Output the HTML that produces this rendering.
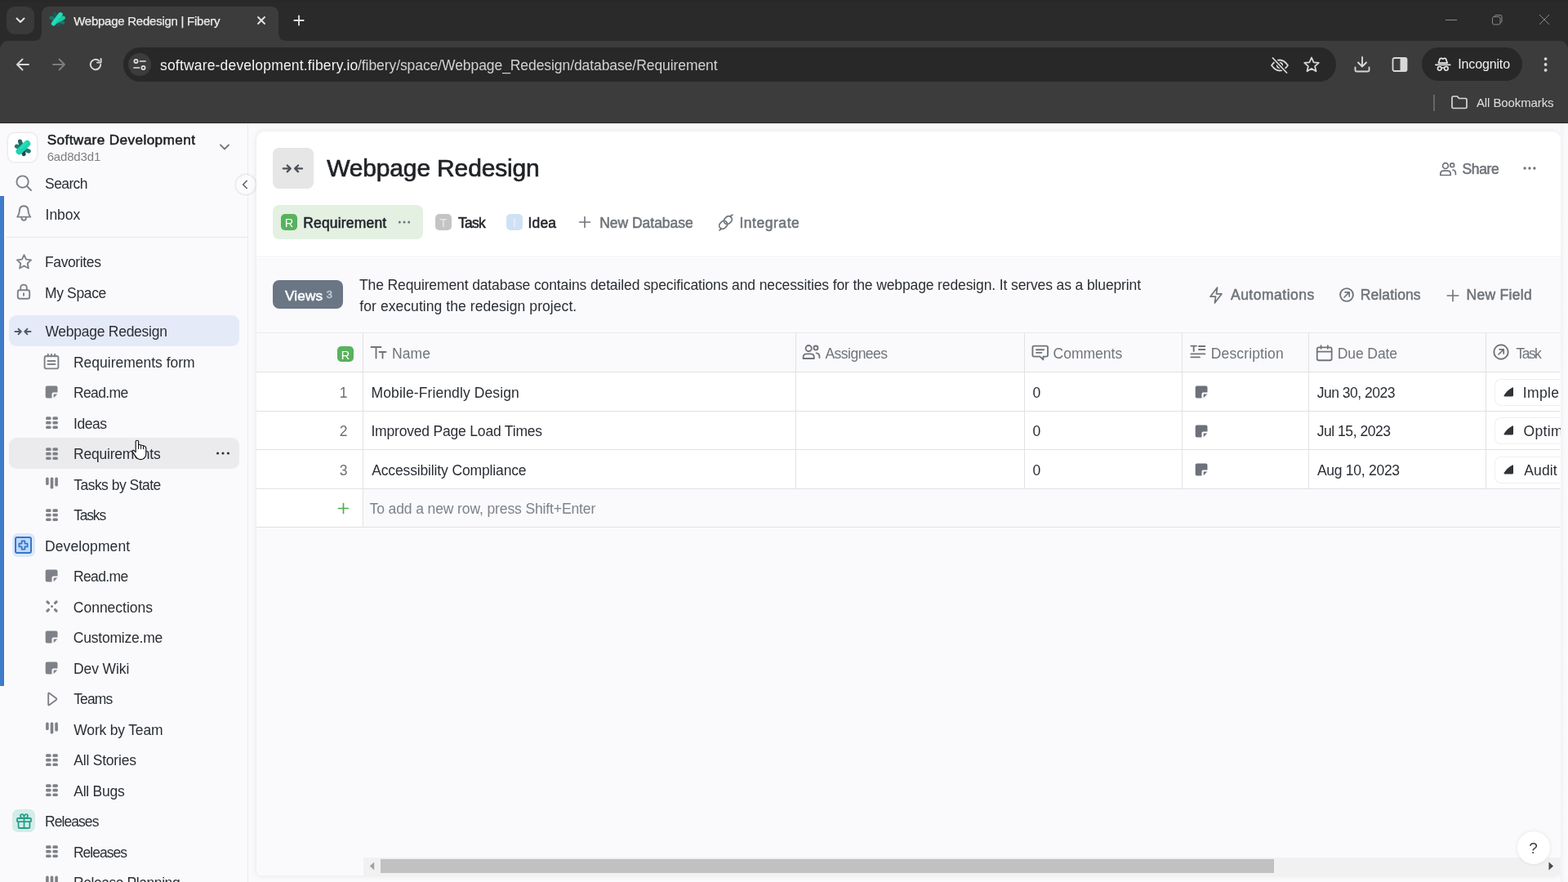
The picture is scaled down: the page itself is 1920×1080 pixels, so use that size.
<!DOCTYPE html>
<html lang="en">
<head>
<meta charset="utf-8">
<title>Webpage Redesign | Fibery</title>
<style>
html,body{margin:0;padding:0;overflow:hidden;}
body{width:1920px;height:1080px;overflow:hidden;position:relative;background:#fafafc;font-family:"Liberation Sans", sans-serif;font-size:17.5px;}
.a{position:absolute;display:block;box-sizing:border-box;}
.t{white-space:nowrap;}
.g{position:absolute;left:0;top:0;width:0;height:0;display:block;}
#w{position:absolute;left:0;top:0;width:1920px;height:1080px;will-change:transform;}
svg.a{overflow:visible;}
</style>
</head>
<body>
<div id="w">
<header id="browser" class="g" aria-label="Browser window">
<div class="a" style="left:0px;top:0px;width:1920px;height:150px;background:#2a2a2a;"></div>
<div class="a" style="left:0px;top:0px;width:1920px;height:3px;background:#282828;"></div>
<div class="a" style="left:8px;top:8px;width:34px;height:34px;background:#3a3a3a;border-radius:10px;"></div>
<svg class="a" style="left:18px;top:19px;" width="14" height="12" viewBox="0 0 14 12"><path d="M2.5 3.5 L7 8 L11.5 3.5" fill="none" stroke="#e3e3e3" stroke-width="2" stroke-linecap="round" stroke-linejoin="round"/></svg>
<div class="a" style="left:0px;top:50px;width:1920px;height:100px;background:#3c3c3c;border-radius:10px 10px 0 0;"></div>
<svg class="a" style="left:41px;top:8px;" width="310" height="42" viewBox="0 0 310 42"><path d="M0 42 Q10 42 10 32 L10 10 Q10 0 20 0 L290 0 Q300 0 300 10 L300 32 Q300 42 310 42 Z" fill="#3c3c3c"/></svg>
<svg class="a" style="left:58.5px;top:12.2px;" width="23" height="23" viewBox="0 0 23 23"><g transform="translate(11.5 11.5) scale(1.02)" stroke-linecap="round" fill="none"><path d="M-7.6 -1.6 L6.4 4" stroke="#1c7468" stroke-width="4.4"/><path d="M-3.4 -6.6 L1.2 6.6" stroke="#1a5b58" stroke-width="4.2"/><path d="M-4.8 5.2 L3.4 -5.6" stroke="#1fd8b3" stroke-width="5.4"/><path d="M-1.5 2.8 L7 -1.6" stroke="#1cc9a6" stroke-width="4.6"/><path d="M-4.8 5.2 L3.4 -5.6" stroke="#22dfba" stroke-width="3"/></g></svg>
<span class="a t" style="left:90.23px;top:15.00px;font-size:15px;line-height:21px;color:#ebebeb;letter-spacing:-0.254px;-webkit-text-stroke:0.25px #ebebeb;">Webpage Redesign | Fibery</span>
<svg class="a" style="left:313px;top:18px;" width="14" height="14" viewBox="0 0 14 14"><path d="M3 3 L11 11 M11 3 L3 11" stroke="#e6e6e6" stroke-width="1.8" stroke-linecap="round"/></svg>
<svg class="a" style="left:357.5px;top:17px;" width="16" height="16" viewBox="0 0 16 16"><path d="M8 2.3 V13.7 M2.3 8 H13.7" stroke="#e6e6e6" stroke-width="1.8" stroke-linecap="round"/></svg>
<svg class="a" style="left:1770px;top:17.2px;" width="14" height="14" viewBox="0 0 14 14"><path d="M0 7.5 H14" stroke="#8a8a8a" stroke-width="1"/></svg>
<svg class="a" style="left:1826px;top:17px;" width="14" height="14" viewBox="0 0 14 14"><rect x="1.5" y="3.5" width="9.5" height="9.5" rx="2" fill="none" stroke="#8a8a8a" stroke-width="1"/><path d="M4 3.5 V3 Q4 1.5 5.5 1.5 H11 Q13 1.5 13 3.5 V9 Q13 10.5 11.5 10.5 H11" fill="none" stroke="#8a8a8a" stroke-width="1"/></svg>
<svg class="a" style="left:1884px;top:17.3px;" width="14" height="14" viewBox="0 0 14 14"><path d="M1 1 L13 13 M13 1 L1 13" stroke="#8a8a8a" stroke-width="1"/></svg>
<svg class="a" style="left:18px;top:69px;" width="20" height="20" viewBox="0 0 20 20"><path d="M17 10 H3.5 M9.5 3.5 L3 10 L9.5 16.5" fill="none" stroke="#d8d8d8" stroke-width="1.9" stroke-linecap="round" stroke-linejoin="round"/></svg>
<svg class="a" style="left:62px;top:69px;" width="20" height="20" viewBox="0 0 20 20"><path d="M3 10 H16.5 M10.5 3.5 L17 10 L10.5 16.5" fill="none" stroke="#7d7d7d" stroke-width="1.9" stroke-linecap="round" stroke-linejoin="round"/></svg>
<svg class="a" style="left:107px;top:69px;" width="20" height="20" viewBox="0 0 20 20"><path d="M16.2 10 A6.2 6.2 0 1 1 14.2 5.4" fill="none" stroke="#d8d8d8" stroke-width="1.9" stroke-linecap="round"/><path d="M16.6 3 V7.6 H12" fill="none" stroke="#d8d8d8" stroke-width="1.9" stroke-linecap="round" stroke-linejoin="round"/></svg>
<div class="a" style="left:150.8px;top:58.2px;width:1485px;height:41.6px;background:#282828;border-radius:20.8px;"></div>
<div class="a" style="left:157px;top:65px;width:28px;height:28px;background:#3c3c3c;border-radius:14px;"></div>
<svg class="a" style="left:162px;top:70px;" width="18" height="18" viewBox="0 0 18 18"><circle cx="4.5" cy="5" r="2.1" fill="none" stroke="#e0e0e0" stroke-width="1.7"/><path d="M9.5 5 H16" stroke="#e0e0e0" stroke-width="1.7" stroke-linecap="round"/><circle cx="13.5" cy="13" r="2.1" fill="none" stroke="#e0e0e0" stroke-width="1.7"/><path d="M2 13 H8.5" stroke="#e0e0e0" stroke-width="1.7" stroke-linecap="round"/></svg>
<span class="a t" style="left:196.01px;top:68.00px;font-size:17.5px;line-height:24px;color:#f2f2f2;letter-spacing:0.180px;">software-development.fibery.io</span>
<span class="a t" style="left:438.00px;top:68.00px;font-size:17.5px;line-height:24px;color:#d2d2d2;letter-spacing:-0.073px;">/fibery/space/Webpage_Redesign/database/Requirement</span>
<svg class="a" style="left:1555px;top:68px;" width="24" height="24" viewBox="0 0 24 24"><path d="M2 12 Q6.5 5.5 12 5.5 Q17.5 5.5 22 12 Q17.5 18.5 12 18.5 Q6.5 18.5 2 12 Z" fill="none" stroke="#d8d8d8" stroke-width="1.8" stroke-linejoin="round"/><circle cx="12" cy="12" r="3.2" fill="none" stroke="#d8d8d8" stroke-width="1.8"/><path d="M3.5 3 L20.5 21" stroke="#282828" stroke-width="4.5"/><path d="M3.5 3 L20.5 21" stroke="#d8d8d8" stroke-width="1.8" stroke-linecap="round"/></svg>
<svg class="a" style="left:1595px;top:68px;" width="22" height="22" viewBox="0 0 22 22"><path d="M11 2.5 L13.6 8.3 L19.8 8.9 L15.1 13.1 L16.5 19.3 L11 16 L5.5 19.3 L6.9 13.1 L2.2 8.9 L8.4 8.3 Z" fill="none" stroke="#d8d8d8" stroke-width="1.8" stroke-linejoin="round"/></svg>
<svg class="a" style="left:1657px;top:67px;" width="22" height="24" viewBox="0 0 22 24"><path d="M11 3 V14 M6 9.5 L11 14.5 L16 9.5" fill="none" stroke="#d8d8d8" stroke-width="1.9" stroke-linecap="round" stroke-linejoin="round"/><path d="M2.5 15.5 V19 Q2.5 20.5 4 20.5 H18 Q19.5 20.5 19.5 19 V15.5" fill="none" stroke="#d8d8d8" stroke-width="1.9" stroke-linecap="round"/></svg>
<svg class="a" style="left:1704px;top:69px;" width="20" height="20" viewBox="0 0 20 20"><rect x="1.5" y="2" width="17" height="16" rx="2" fill="none" stroke="#d8d8d8" stroke-width="1.8"/><rect x="10.5" y="2" width="8" height="16" fill="#d8d8d8"/></svg>
<div class="a" style="left:1741px;top:58px;width:123px;height:41.2px;background:#282828;border-radius:20.6px;"></div>
<svg class="a" style="left:1755.5px;top:68.5px;" width="21.6" height="19.8" viewBox="0 0 24 22"><path d="M8 3.2 L10 2.6 L12 3.6 L14 2.6 L16 3.2 L18 9 H6 Z" fill="none" stroke="#e8e8e8" stroke-width="1.8" stroke-linejoin="round"/><path d="M2 11.5 H22" stroke="#e8e8e8" stroke-width="1.8" stroke-linecap="round"/><circle cx="7.5" cy="16.5" r="2.6" fill="none" stroke="#e8e8e8" stroke-width="1.8"/><circle cx="16.5" cy="16.5" r="2.6" fill="none" stroke="#e8e8e8" stroke-width="1.8"/><path d="M10 16 Q12 15 14 16" fill="none" stroke="#e8e8e8" stroke-width="1.6"/></svg>
<span class="a t" style="left:1785.32px;top:68.00px;font-size:16px;line-height:22px;color:#f0f0f0;letter-spacing:-0.149px;">Incognito</span>
<svg class="a" style="left:1888px;top:68px;" width="10" height="22" viewBox="0 0 10 22"><circle cx="4.6" cy="4.1" r="1.9" fill="#d8d8d8"/><circle cx="4.6" cy="11" r="1.9" fill="#d8d8d8"/><circle cx="4.6" cy="17.9" r="1.9" fill="#d8d8d8"/></svg>
<div class="a" style="left:1755.2px;top:116px;width:2px;height:19.5px;background:#666666;"></div>
<svg class="a" style="left:1776px;top:115px;" width="22" height="20" viewBox="0 0 22 20"><path d="M2 4.5 Q2 3 3.5 3 H8.5 L10.5 5.5 H18.5 Q20 5.5 20 7 V16 Q20 17.5 18.5 17.5 H3.5 Q2 17.5 2 16 Z" fill="none" stroke="#d8d8d8" stroke-width="1.7" stroke-linejoin="round"/></svg>
<span class="a t" style="left:1807.97px;top:115.00px;font-size:15px;line-height:21px;color:#e0e0e0;letter-spacing:-0.107px;">All Bookmarks</span>
<div class="a" style="left:0px;top:149.5px;width:1920px;height:1.5px;background:#262626;"></div>
</header>
<nav id="sidebar" class="g" aria-label="Workspace navigation">
<div class="a" style="left:0px;top:151px;width:1920px;height:929px;background:#fafafc;"></div>
<div class="a" style="left:303px;top:151px;width:1px;height:929px;background:#ececf0;"></div>
<div class="a" style="left:0px;top:240.2px;width:5px;height:599.8px;background:linear-gradient(to right,#3e7ccd 0,#3f7ccb 45%,#4877b2 100%);"></div>
<div class="a" style="left:10px;top:163px;width:35px;height:35px;background:#ffffff;border-radius:8px;box-shadow:0 0 3px rgba(0,0,0,.18);"></div>
<svg class="a" style="left:16.6px;top:169.1px;" width="23" height="23" viewBox="0 0 23 23"><g transform="translate(11.5 11.5) scale(1.09)" stroke-linecap="round" fill="none"><path d="M-7.4 -1.3 L6.2 4.2" stroke="#1f7a70" stroke-width="4.6"/><path d="M-3.6 -6.8 L0.6 7.6" stroke="#1d4a50" stroke-width="4.4"/><path d="M-3.6 -6.8 L-2.4 -2.6" stroke="#1e6962" stroke-width="4.4"/><path d="M-4.6 4.4 L4.4 -4.2" stroke="#1dd3b0" stroke-width="7.2"/><path d="M-2.4 0.2 L3 -5" stroke="#2ee6c2" stroke-width="2.6" opacity=".55"/></g></svg>
<span class="a t" style="left:57.72px;top:159.00px;font-size:17.2px;line-height:24px;color:#1c1f23;letter-spacing:0.386px;-webkit-text-stroke:0.53px #1c1f23;">Software Development</span>
<span class="a t" style="left:57.64px;top:181.00px;font-size:15px;line-height:21px;color:#7f8084;letter-spacing:-0.163px;">6ad8d3d1</span>
<svg class="a" style="left:268px;top:174px;" width="14" height="12" viewBox="0 0 14 12"><path d="M2 3.5 L7 8.5 L12 3.5" fill="none" stroke="#6f7782" stroke-width="1.8" stroke-linecap="round" stroke-linejoin="round"/></svg>
<svg class="a" style="left:18.4px;top:212.5px;" width="22" height="22" viewBox="0 0 22 22"><circle cx="9.6" cy="9.6" r="7.2" fill="none" stroke="#7e8187" stroke-width="1.9"/><path d="M15 15 L20 20" stroke="#7e8187" stroke-width="1.9" stroke-linecap="round"/></svg>
<span class="a t" style="left:55.11px;top:213.00px;font-size:17.5px;line-height:24px;color:#2a2e34;letter-spacing:-0.623px;">Search</span>
<svg class="a" style="left:18px;top:250px;" width="22" height="22" viewBox="18 250 22 22"><path d="M21.2 265.6 L22.9 262.4 Q23.8 260 23.9 257.6 Q24.3 252.3 29.2 252.3 Q34.1 252.3 34.5 257.6 Q34.6 260 35.5 262.4 L37.2 265.6 Z" fill="none" stroke="#7e8187" stroke-width="1.9" stroke-linejoin="round"/><path d="M26.4 266.6 Q26.6 269.8 29.2 269.8 Q31.8 269.8 32 266.6" fill="none" stroke="#7e8187" stroke-width="1.9" stroke-linecap="round"/></svg>
<span class="a t" style="left:55.59px;top:251.00px;font-size:17.5px;line-height:24px;color:#2a2e34;letter-spacing:-0.052px;">Inbox</span>
<div class="a" style="left:8px;top:290px;width:295px;height:1px;background:#e6e7ea;"></div>
<svg class="a" style="left:18.8px;top:309.7px;" width="21" height="21" viewBox="0 0 22 22"><path d="M11 2.2 L13.7 8 L20 8.8 L15.4 13.1 L16.6 19.4 L11 16.3 L5.4 19.4 L6.6 13.1 L2 8.8 L8.3 8 Z" fill="none" stroke="#7e8187" stroke-width="1.95" stroke-linejoin="round"/></svg>
<span class="a t" style="left:54.96px;top:309.00px;font-size:17.5px;line-height:24px;color:#2a2e34;letter-spacing:-0.375px;">Favorites</span>
<svg class="a" style="left:18.2px;top:345.6px;" width="22" height="22" viewBox="0 0 22 22"><rect x="3.8" y="9.2" width="14.4" height="10.6" rx="2.2" fill="none" stroke="#7e8187" stroke-width="1.9"/><path d="M7.2 9 V6.5 Q7.2 2.6 11 2.6 Q14.8 2.6 14.8 6.5 V9" fill="none" stroke="#7e8187" stroke-width="1.9"/><path d="M11 13.2 V15.8" stroke="#7e8187" stroke-width="1.9" stroke-linecap="round"/></svg>
<span class="a t" style="left:54.96px;top:347.00px;font-size:17.5px;line-height:24px;color:#2a2e34;letter-spacing:-0.357px;">My Space</span>
<div class="a" style="left:288.5px;top:214px;width:24px;height:24px;background:#fbfbfd;border-radius:12px;box-shadow:0 0 3px rgba(0,0,0,.22);"></div>
<svg class="a" style="left:294px;top:219px;" width="12" height="14" viewBox="0 0 12 14"><path d="M8.2 2.5 L3.6 7 L8.2 11.5" fill="none" stroke="#5f6670" stroke-width="1.7" stroke-linecap="round" stroke-linejoin="round"/></svg>
<div class="a" style="left:10.6px;top:386.3px;width:282px;height:37.5px;background:#e5eaf9;border-radius:9px;"></div>
<svg class="a" style="left:17.0px;top:394.6px;" width="22.0" height="22.0" viewBox="0 0 22 22"><path d="M1.5 11 H8.5 M5.5 7.8 L8.8 11 L5.5 14.2 M20.5 11 H13.5 M16.5 7.8 L13.2 11 L16.5 14.2" fill="none" stroke="#555b66" stroke-width="1.9" stroke-linecap="round" stroke-linejoin="round"/></svg>
<span class="a t" style="left:55.42px;top:394.00px;font-size:17.5px;line-height:24px;color:#2a2e34;letter-spacing:-0.259px;">Webpage Redesign</span>
<svg class="a" style="left:52px;top:431.8px;" width="22" height="22" viewBox="0 0 22 22"><rect x="2.6" y="4" width="16.8" height="15.4" rx="2.2" fill="none" stroke="#7e8187" stroke-width="1.9"/><path d="M6.8 1.8 V4.5 M11 1.8 V4.5 M15.2 1.8 V4.5 M6.5 10 H15.5 M6.5 14 H15.5" stroke="#7e8187" stroke-width="1.9" stroke-linecap="round"/></svg>
<span class="a t" style="left:89.96px;top:432.00px;font-size:17.5px;line-height:24px;color:#2a2e34;letter-spacing:-0.007px;">Requirements form</span>
<svg class="a" style="left:55.4px;top:472.4px;" width="16.2" height="16.0" viewBox="0 0 16 16"><path d="M2.6 0.6 H13.4 Q15.4 0.6 15.4 2.6 V8.4 H10.4 Q8.4 8.4 8.4 10.4 V15.4 H2.6 Q0.6 15.4 0.6 13.4 V2.6 Q0.6 0.6 2.6 0.6 Z" fill="#7e8187"/><path d="M10.6 10.6 H15.2 L10.6 15.2 Z" fill="#7e8187"/></svg>
<span class="a t" style="left:89.96px;top:469.00px;font-size:17.5px;line-height:24px;color:#2a2e34;letter-spacing:-0.616px;">Read.me</span>
<svg class="a" style="left:56.0px;top:510.1px;" width="15" height="15" viewBox="0 0 15 15"><rect x="0.1" y="0.3" width="6.5" height="3.6" rx="1.5" fill="#7e8187"/><rect x="8.4" y="0.3" width="6.5" height="3.6" rx="1.5" fill="#7e8187"/><rect x="0.1" y="5.85" width="6.5" height="3.6" rx="1.5" fill="#7e8187"/><rect x="8.4" y="5.85" width="6.5" height="3.6" rx="1.5" fill="#7e8187"/><rect x="0.1" y="11.4" width="6.5" height="3.6" rx="1.5" fill="#7e8187"/><rect x="8.4" y="11.4" width="6.5" height="3.6" rx="1.5" fill="#7e8187"/></svg>
<span class="a t" style="left:89.99px;top:507.00px;font-size:17.5px;line-height:24px;color:#2a2e34;letter-spacing:-0.466px;">Ideas</span>
<div class="a" style="left:10.6px;top:536.2px;width:282px;height:37.5px;background:#ebebee;border-radius:9px;"></div>
<svg class="a" style="left:262.5px;top:551.0px;" width="20" height="8" viewBox="0 0 20 8"><g fill="#2f3338"><circle cx="3.5999999999999996" cy="4" r="1.6"/><circle cx="10" cy="4" r="1.6"/><circle cx="16.4" cy="4" r="1.6"/></g></svg>
<svg class="a" style="left:56.0px;top:547.6px;" width="15" height="15" viewBox="0 0 15 15"><rect x="0.1" y="0.3" width="6.5" height="3.6" rx="1.5" fill="#7e8187"/><rect x="8.4" y="0.3" width="6.5" height="3.6" rx="1.5" fill="#7e8187"/><rect x="0.1" y="5.85" width="6.5" height="3.6" rx="1.5" fill="#7e8187"/><rect x="8.4" y="5.85" width="6.5" height="3.6" rx="1.5" fill="#7e8187"/><rect x="0.1" y="11.4" width="6.5" height="3.6" rx="1.5" fill="#7e8187"/><rect x="8.4" y="11.4" width="6.5" height="3.6" rx="1.5" fill="#7e8187"/></svg>
<span class="a t" style="left:89.96px;top:544.00px;font-size:17.5px;line-height:24px;color:#2a2e34;letter-spacing:-0.206px;">Requirements</span>
<svg class="a" style="left:56.0px;top:584.4px;" width="15" height="15" viewBox="0 0 15 15"><rect x="0.1" y="0.6" width="3.6" height="9.4" rx="1.5" fill="#7e8187"/><rect x="5.7" y="0.6" width="3.6" height="13.8" rx="1.5" fill="#7e8187"/><rect x="11.3" y="0.6" width="3.6" height="11" rx="1.5" fill="#7e8187"/></svg>
<span class="a t" style="left:90.21px;top:582.00px;font-size:17.5px;line-height:24px;color:#2a2e34;letter-spacing:-0.518px;">Tasks by State</span>
<svg class="a" style="left:56.0px;top:622.6px;" width="15" height="15" viewBox="0 0 15 15"><rect x="0.1" y="0.3" width="6.5" height="3.6" rx="1.5" fill="#7e8187"/><rect x="8.4" y="0.3" width="6.5" height="3.6" rx="1.5" fill="#7e8187"/><rect x="0.1" y="5.85" width="6.5" height="3.6" rx="1.5" fill="#7e8187"/><rect x="8.4" y="5.85" width="6.5" height="3.6" rx="1.5" fill="#7e8187"/><rect x="0.1" y="11.4" width="6.5" height="3.6" rx="1.5" fill="#7e8187"/><rect x="8.4" y="11.4" width="6.5" height="3.6" rx="1.5" fill="#7e8187"/></svg>
<span class="a t" style="left:90.21px;top:619.00px;font-size:17.5px;line-height:24px;color:#2a2e34;letter-spacing:-1.202px;">Tasks</span>
<div class="a" style="left:14.8px;top:653.3px;width:28.5px;height:28.5px;background:#dbe8fb;border-radius:7px;"></div>
<svg class="a" style="left:18.1px;top:656.8px;" width="21" height="21" viewBox="0 0 21 21"><rect x="1" y="1" width="19" height="19" rx="2" fill="#bcdafd" stroke="#3b74c6" stroke-width="2"/><path d="M8.6 5.4 H12.4 V8.6 H15.6 V12.4 H12.4 V15.6 H8.6 V12.4 H5.4 V8.6 H8.6 Z" fill="none" stroke="#3b74c6" stroke-width="1.8" stroke-linejoin="round"/></svg>
<span class="a t" style="left:54.96px;top:657.00px;font-size:17.5px;line-height:24px;color:#2a2e34;letter-spacing:0.105px;">Development</span>
<svg class="a" style="left:55.4px;top:697.4px;" width="16.2" height="16.0" viewBox="0 0 16 16"><path d="M2.6 0.6 H13.4 Q15.4 0.6 15.4 2.6 V8.4 H10.4 Q8.4 8.4 8.4 10.4 V15.4 H2.6 Q0.6 15.4 0.6 13.4 V2.6 Q0.6 0.6 2.6 0.6 Z" fill="#7e8187"/><path d="M10.6 10.6 H15.2 L10.6 15.2 Z" fill="#7e8187"/></svg>
<span class="a t" style="left:89.96px;top:694.00px;font-size:17.5px;line-height:24px;color:#2a2e34;letter-spacing:-0.616px;">Read.me</span>
<svg class="a" style="left:56.1px;top:735.4px;" width="15" height="15" viewBox="0 0 15 15"><g fill="#7e8187"><rect x="0.0" y="1.1" width="5.4" height="3.2" rx="1.6" transform="rotate(45 2.7 2.7)"/><rect x="9.600000000000001" y="1.1" width="5.4" height="3.2" rx="1.6" transform="rotate(-45 12.3 2.7)"/><rect x="0.0" y="10.700000000000001" width="5.4" height="3.2" rx="1.6" transform="rotate(-45 2.7 12.3)"/><rect x="9.600000000000001" y="10.700000000000001" width="5.4" height="3.2" rx="1.6" transform="rotate(45 12.3 12.3)"/><circle cx="7.5" cy="7.5" r="1.5"/></g></svg>
<span class="a t" style="left:89.81px;top:732.00px;font-size:17.5px;line-height:24px;color:#2a2e34;letter-spacing:-0.006px;">Connections</span>
<svg class="a" style="left:55.4px;top:772.4px;" width="16.2" height="16.0" viewBox="0 0 16 16"><path d="M2.6 0.6 H13.4 Q15.4 0.6 15.4 2.6 V8.4 H10.4 Q8.4 8.4 8.4 10.4 V15.4 H2.6 Q0.6 15.4 0.6 13.4 V2.6 Q0.6 0.6 2.6 0.6 Z" fill="#7e8187"/><path d="M10.6 10.6 H15.2 L10.6 15.2 Z" fill="#7e8187"/></svg>
<span class="a t" style="left:89.81px;top:769.00px;font-size:17.5px;line-height:24px;color:#2a2e34;letter-spacing:-0.215px;">Customize.me</span>
<svg class="a" style="left:55.4px;top:809.9px;" width="16.2" height="16.0" viewBox="0 0 16 16"><path d="M2.6 0.6 H13.4 Q15.4 0.6 15.4 2.6 V8.4 H10.4 Q8.4 8.4 8.4 10.4 V15.4 H2.6 Q0.6 15.4 0.6 13.4 V2.6 Q0.6 0.6 2.6 0.6 Z" fill="#7e8187"/><path d="M10.6 10.6 H15.2 L10.6 15.2 Z" fill="#7e8187"/></svg>
<span class="a t" style="left:89.96px;top:807.00px;font-size:17.5px;line-height:24px;color:#2a2e34;letter-spacing:-0.087px;">Dev Wiki</span>
<svg class="a" style="left:55.5px;top:845.5px;" width="16" height="20" viewBox="0 0 16 20"><path d="M3.2 3.4 Q3.2 2 4.4 2.8 L12.8 9 Q13.8 10 12.8 11 L4.4 17.2 Q3.2 18 3.2 16.6 Z" fill="none" stroke="#7e8187" stroke-width="1.9" stroke-linejoin="round"/></svg>
<span class="a t" style="left:90.21px;top:844.00px;font-size:17.5px;line-height:24px;color:#2a2e34;letter-spacing:-0.904px;">Teams</span>
<svg class="a" style="left:56.0px;top:884.4px;" width="15" height="15" viewBox="0 0 15 15"><rect x="0.1" y="0.6" width="3.6" height="9.4" rx="1.5" fill="#7e8187"/><rect x="5.7" y="0.6" width="3.6" height="13.8" rx="1.5" fill="#7e8187"/><rect x="11.3" y="0.6" width="3.6" height="11" rx="1.5" fill="#7e8187"/></svg>
<span class="a t" style="left:90.32px;top:882.00px;font-size:17.5px;line-height:24px;color:#2a2e34;letter-spacing:-0.180px;">Work by Team</span>
<svg class="a" style="left:56.0px;top:922.6px;" width="15" height="15" viewBox="0 0 15 15"><rect x="0.1" y="0.3" width="6.5" height="3.6" rx="1.5" fill="#7e8187"/><rect x="8.4" y="0.3" width="6.5" height="3.6" rx="1.5" fill="#7e8187"/><rect x="0.1" y="5.85" width="6.5" height="3.6" rx="1.5" fill="#7e8187"/><rect x="8.4" y="5.85" width="6.5" height="3.6" rx="1.5" fill="#7e8187"/><rect x="0.1" y="11.4" width="6.5" height="3.6" rx="1.5" fill="#7e8187"/><rect x="8.4" y="11.4" width="6.5" height="3.6" rx="1.5" fill="#7e8187"/></svg>
<span class="a t" style="left:90.27px;top:919.00px;font-size:17.5px;line-height:24px;color:#2a2e34;letter-spacing:-0.211px;">All Stories</span>
<svg class="a" style="left:56.0px;top:960.1px;" width="15" height="15" viewBox="0 0 15 15"><rect x="0.1" y="0.3" width="6.5" height="3.6" rx="1.5" fill="#7e8187"/><rect x="8.4" y="0.3" width="6.5" height="3.6" rx="1.5" fill="#7e8187"/><rect x="0.1" y="5.85" width="6.5" height="3.6" rx="1.5" fill="#7e8187"/><rect x="8.4" y="5.85" width="6.5" height="3.6" rx="1.5" fill="#7e8187"/><rect x="0.1" y="11.4" width="6.5" height="3.6" rx="1.5" fill="#7e8187"/><rect x="8.4" y="11.4" width="6.5" height="3.6" rx="1.5" fill="#7e8187"/></svg>
<span class="a t" style="left:90.27px;top:957.00px;font-size:17.5px;line-height:24px;color:#2a2e34;letter-spacing:-0.262px;">All Bugs</span>
<div class="a" style="left:15px;top:991.0px;width:28px;height:28px;background:#d5ece8;border-radius:7px;"></div>
<svg class="a" style="left:18.5px;top:994.5px;" width="21" height="21" viewBox="0 0 21 21"><g fill="none" stroke="#23a08a" stroke-width="1.8" stroke-linejoin="round" stroke-linecap="round"><rect x="2" y="7" width="17" height="4.2" rx="1"/><path d="M3.6 11.2 V17.4 Q3.6 19 5.2 19 H15.8 Q17.4 19 17.4 17.4 V11.2 M10.5 7 V19"/><path d="M10.5 7 Q6 7 6 4.3 Q6 2.2 8 2.2 Q10.5 2.2 10.5 7 Q10.5 2.2 13 2.2 Q15 2.2 15 4.3 Q15 7 10.5 7"/></g></svg>
<span class="a t" style="left:54.96px;top:994.00px;font-size:17.5px;line-height:24px;color:#2a2e34;letter-spacing:-0.927px;">Releases</span>
<svg class="a" style="left:56.0px;top:1035.1px;" width="15" height="15" viewBox="0 0 15 15"><rect x="0.1" y="0.3" width="6.5" height="3.6" rx="1.5" fill="#7e8187"/><rect x="8.4" y="0.3" width="6.5" height="3.6" rx="1.5" fill="#7e8187"/><rect x="0.1" y="5.85" width="6.5" height="3.6" rx="1.5" fill="#7e8187"/><rect x="8.4" y="5.85" width="6.5" height="3.6" rx="1.5" fill="#7e8187"/><rect x="0.1" y="11.4" width="6.5" height="3.6" rx="1.5" fill="#7e8187"/><rect x="8.4" y="11.4" width="6.5" height="3.6" rx="1.5" fill="#7e8187"/></svg>
<span class="a t" style="left:89.96px;top:1032.00px;font-size:17.5px;line-height:24px;color:#2a2e34;letter-spacing:-0.998px;">Releases</span>
<svg class="a" style="left:56.0px;top:1071.9px;" width="15" height="15" viewBox="0 0 15 15"><rect x="0.1" y="0.6" width="3.6" height="9.4" rx="1.5" fill="#7e8187"/><rect x="5.7" y="0.6" width="3.6" height="13.8" rx="1.5" fill="#7e8187"/><rect x="11.3" y="0.6" width="3.6" height="11" rx="1.5" fill="#7e8187"/></svg>
<span class="a t" style="left:89.96px;top:1069.00px;font-size:17.5px;line-height:24px;color:#2a2e34;letter-spacing:-0.434px;">Release Planning</span>
</nav>
<main id="content" class="g" aria-label="Webpage Redesign space">
<div class="a" style="left:313.6px;top:161.2px;width:1597px;height:910.6px;background:#fafafc;border-radius:10px 10px 6px 6px;box-shadow:0 0 7px rgba(0,0,0,.09);overflow:hidden;"></div>
<div class="a" style="left:314px;top:161.2px;width:1596.6px;height:152.8px;background:#ffffff;border-radius:10px 10px 0 0;"></div>
<div class="a" style="left:314px;top:314px;width:1596.6px;height:1px;background:#f3f3f5;"></div>
<div class="a" style="left:314px;top:315px;width:1596.6px;height:2px;background:#fdfdfe;"></div>
<div class="a" style="left:314px;top:317px;width:1596.6px;height:1px;background:#f5f5f7;"></div>
<div class="a" style="left:334.3px;top:181px;width:49.5px;height:49.6px;background:#e6e6e7;border-radius:7.5px;"></div>
<svg class="a" style="left:345.38px;top:192.58px;" width="26.84" height="26.84" viewBox="0 0 22 22"><path d="M1.5 11 H8.5 M5.5 7.8 L8.8 11 L5.5 14.2 M20.5 11 H13.5 M16.5 7.8 L13.2 11 L16.5 14.2" fill="none" stroke="#4d5158" stroke-width="1.9" stroke-linecap="round" stroke-linejoin="round"/></svg>
<span class="a t" style="left:400.17px;top:185.00px;font-size:30px;line-height:42px;color:#1f2226;letter-spacing:-0.159px;-webkit-text-stroke:0.68px #1f2226;">Webpage Redesign</span>
<svg class="a" style="left:1762px;top:195.6px;" width="22" height="22" viewBox="0 0 22 22"><g fill="none" stroke="#6f747a" stroke-width="1.7" stroke-linecap="round"><circle cx="8" cy="7" r="3.4"/><path d="M1.8 18.5 V17 Q1.8 13.2 5.6 13.2 H10.4 Q14.2 13.2 14.2 17 V18.5 Z" stroke-linejoin="round"/><circle cx="16.2" cy="6.2" r="2.4"/><path d="M17 12.2 Q20.4 12.6 20.4 16.2 V17.6"/></g></svg>
<span class="a t" style="left:1790.51px;top:195.00px;font-size:17.5px;line-height:24px;color:#6f747a;letter-spacing:-0.356px;-webkit-text-stroke:0.54px #6f747a;">Share</span>
<svg class="a" style="left:1863.3px;top:202.3px;" width="20" height="8" viewBox="0 0 20 8"><g fill="#6f747a"><circle cx="4.1" cy="4" r="1.7"/><circle cx="10" cy="4" r="1.7"/><circle cx="15.9" cy="4" r="1.7"/></g></svg>
<div class="a" style="left:334.3px;top:251px;width:183.3px;height:42.2px;background:#e3f0e2;border-radius:8px;"></div>
<div class="a" style="left:344px;top:262.2px;width:20px;height:20px;background:#58b25c;border-radius:5px;"></div>
<span class="a t" style="top:263.00px;font-size:14.5px;line-height:20px;color:#fff;left:344px;width:20px;text-align:center;">R</span>
<span class="a t" style="left:371.16px;top:261.00px;font-size:17.5px;line-height:24px;color:#23272c;letter-spacing:0.187px;-webkit-text-stroke:0.54px #23272c;">Requirement</span>
<svg class="a" style="left:484.7px;top:268.1px;" width="20" height="8" viewBox="0 0 20 8"><g fill="#6e737b"><circle cx="4.3" cy="4" r="1.5"/><circle cx="10" cy="4" r="1.5"/><circle cx="15.7" cy="4" r="1.5"/></g></svg>
<div class="a" style="left:533px;top:262.2px;width:20px;height:20px;background:#c4c4c4;border-radius:5px;"></div>
<span class="a t" style="top:263.00px;font-size:14.5px;line-height:20px;color:#e9e9e9;left:533px;width:20px;text-align:center;">T</span>
<span class="a t" style="left:560.91px;top:261.00px;font-size:17.5px;line-height:24px;color:#23272c;letter-spacing:-0.705px;-webkit-text-stroke:0.54px #23272c;">Task</span>
<div class="a" style="left:620px;top:262.2px;width:20px;height:20px;background:#cfe2f4;border-radius:5px;"></div>
<span class="a t" style="top:263.00px;font-size:14.5px;line-height:20px;color:#eaf3fc;left:620px;width:20px;text-align:center;">I</span>
<span class="a t" style="left:646.59px;top:261.00px;font-size:17.5px;line-height:24px;color:#23272c;letter-spacing:0.118px;-webkit-text-stroke:0.54px #23272c;">Idea</span>
<svg class="a" style="left:708.2px;top:264.1px;" width="16" height="16" viewBox="0 0 16 16"><path d="M8 1.6 V14.4 M1.6 8 H14.4" stroke="#6f747a" stroke-width="1.6" stroke-linecap="round"/></svg>
<span class="a t" style="left:734.16px;top:261.00px;font-size:17.5px;line-height:24px;color:#6f747a;letter-spacing:-0.016px;-webkit-text-stroke:0.54px #6f747a;">New Database</span>
<svg class="a" style="left:878px;top:262px;" width="21" height="21" viewBox="0 0 21 21"><g fill="none" stroke="#6f747a" stroke-width="1.7" stroke-linecap="round" stroke-linejoin="round" transform="rotate(-45 10.5 10.5)"><rect x="1.2" y="6.4" width="10.6" height="8.2" rx="4.1"/><rect x="9.2" y="6.4" width="10.6" height="8.2" rx="4.1"/></g><path d="M16.5 2.5 L19 1 M3 20 L5 18.5" stroke="#6f747a" stroke-width="1.6" stroke-linecap="round"/></svg>
<span class="a t" style="left:905.39px;top:261.00px;font-size:17.5px;line-height:24px;color:#6f747a;letter-spacing:0.539px;-webkit-text-stroke:0.54px #6f747a;">Integrate</span>
<div class="a" style="left:334px;top:343.1px;width:86px;height:34.7px;background:#6b7684;border-radius:8px;"></div>
<span class="a t" style="left:349.12px;top:350.00px;font-size:17.2px;line-height:24px;color:#ffffff;letter-spacing:0.090px;-webkit-text-stroke:0.5px #ffffff;">Views</span>
<span class="a t" style="left:399.39px;top:352.00px;font-size:13.5px;line-height:18px;color:#c0cbd8;-webkit-text-stroke:0.42px #c0cbd8;">3</span>
<span class="a t" style="left:440.01px;top:337.00px;font-size:17.5px;line-height:24px;color:#2a2e34;letter-spacing:-0.120px;">The Requirement database contains detailed specifications and necessities for the webpage redesign. It serves as a blueprint</span>
<span class="a t" style="left:440.35px;top:363.00px;font-size:17.5px;line-height:24px;color:#2a2e34;letter-spacing:0.065px;">for executing the redesign project.</span>
<svg class="a" style="left:1479px;top:350px;" width="20" height="23" viewBox="0 0 20 23"><path d="M11.6 2 L3 13.2 H9.6 L8.4 21 L17 9.8 H10.4 Z" fill="none" stroke="#6f747a" stroke-width="1.7" stroke-linejoin="round"/></svg>
<span class="a t" style="left:1506.97px;top:349.00px;font-size:17.5px;line-height:24px;color:#6f747a;letter-spacing:0.499px;-webkit-text-stroke:0.54px #6f747a;">Automations</span>
<svg class="a" style="left:1639.1px;top:351px;" width="20" height="20" viewBox="0 0 20 20"><circle cx="10" cy="10" r="7.9" fill="none" stroke="#6f747a" stroke-width="1.9"/><path d="M7 13 L13 7 M8 6.8 H13.2 V12" fill="none" stroke="#6f747a" stroke-width="1.7" stroke-linecap="round" stroke-linejoin="round"/></svg>
<span class="a t" style="left:1665.76px;top:349.00px;font-size:17.5px;line-height:24px;color:#6f747a;letter-spacing:0.114px;-webkit-text-stroke:0.54px #6f747a;">Relations</span>
<svg class="a" style="left:1771px;top:353.5px;" width="16" height="16" viewBox="0 0 16 16"><path d="M8 1.2 V14.8 M1.2 8 H14.8" stroke="#6f747a" stroke-width="1.6" stroke-linecap="round"/></svg>
<span class="a t" style="left:1795.56px;top:349.00px;font-size:17.5px;line-height:24px;color:#6f747a;letter-spacing:0.283px;-webkit-text-stroke:0.54px #6f747a;">New Field</span>
<div class="a" style="left:314px;top:407px;width:1596.6px;height:1px;background:#eaeaec;"></div>
<div class="a" style="left:314px;top:456px;width:1596.6px;height:142px;background:#ffffff;"></div>
<div class="a" style="left:314px;top:598px;width:130px;height:47px;background:#ffffff;"></div>
<div class="a" style="left:314px;top:455px;width:1596px;height:1px;background:#e1e1e4;"></div>
<div class="a" style="left:314px;top:503px;width:1596px;height:1px;background:#e1e1e4;"></div>
<div class="a" style="left:314px;top:550px;width:1596px;height:1px;background:#e1e1e4;"></div>
<div class="a" style="left:314px;top:598px;width:1596px;height:1px;background:#e1e1e4;"></div>
<div class="a" style="left:314px;top:645px;width:1596px;height:1px;background:#e1e1e4;"></div>
<div class="a" style="left:444px;top:408px;width:1px;height:190px;background:#e2e2e5;"></div>
<div class="a" style="left:974px;top:408px;width:1px;height:190px;background:#e2e2e5;"></div>
<div class="a" style="left:1254px;top:408px;width:1px;height:190px;background:#e2e2e5;"></div>
<div class="a" style="left:1447px;top:408px;width:1px;height:190px;background:#e2e2e5;"></div>
<div class="a" style="left:1602px;top:408px;width:1px;height:190px;background:#e2e2e5;"></div>
<div class="a" style="left:1819px;top:408px;width:1px;height:190px;background:#e2e2e5;"></div>
<div class="a" style="left:444px;top:598px;width:1px;height:47px;background:#e2e2e5;"></div>
<div class="a" style="left:413.1px;top:423.8px;width:19.6px;height:19.6px;background:#58b25c;border-radius:5px;"></div>
<span class="a t" style="top:425.00px;font-size:14.5px;line-height:20px;color:#fff;left:413.1px;width:19.6px;text-align:center;">R</span>
<svg class="a" style="left:453px;top:423px;" width="22" height="18" viewBox="0 0 22 18"><path d="M1.5 2 H13.5 M7.5 2 V15.5 M11.5 8 H19.5 M15.5 8 V15.5" fill="none" stroke="#6f747a" stroke-width="1.85" stroke-linecap="round"/></svg>
<span class="a t" style="left:479.96px;top:421.00px;font-size:17.5px;line-height:24px;color:#6f747a;letter-spacing:0.111px;">Name</span>
<svg class="a" style="left:982px;top:420.4px;" width="23" height="22" viewBox="0 0 23 22"><g fill="none" stroke="#6f747a" stroke-width="1.85" stroke-linecap="round"><circle cx="8.2" cy="6.6" r="3.6"/><path d="M1.6 19 V17.4 Q1.6 13.4 5.6 13.4 H10.8 Q14.8 13.4 14.8 17.4 V19 Z" stroke-linejoin="round"/><circle cx="17" cy="6" r="2.5"/><path d="M17.6 12.4 Q21.4 12.8 21.4 16.6 V18"/></g></svg>
<span class="a t" style="left:1010.47px;top:421.00px;font-size:17.5px;line-height:24px;color:#6f747a;letter-spacing:-0.522px;">Assignees</span>
<svg class="a" style="left:1263px;top:420.7px;" width="22" height="22" viewBox="0 0 22 22"><path d="M3.2 2.6 H18.2 Q20 2.6 20 4.4 V13.8 Q20 15.6 18.2 15.6 H14.4 L14.4 19.4 L10.4 15.6 H3.2 Q1.4 15.6 1.4 13.8 V4.4 Q1.4 2.6 3.2 2.6 Z M6 7.2 H15.2 M6 10.8 H12.4" fill="none" stroke="#6f747a" stroke-width="1.85" stroke-linejoin="round" stroke-linecap="round"/></svg>
<span class="a t" style="left:1289.61px;top:421.00px;font-size:17.5px;line-height:24px;color:#6f747a;letter-spacing:-0.012px;">Comments</span>
<svg class="a" style="left:1457px;top:422.4px;" width="20" height="18" viewBox="0 0 20 18"><path d="M1.4 1.6 H8 M4.7 1.6 V8 M11 2 H18.4 M11 6 H18.4 M1.4 11.4 H18.4 M1.4 15.4 H12" fill="none" stroke="#6f747a" stroke-width="1.85" stroke-linecap="round"/></svg>
<span class="a t" style="left:1482.76px;top:421.00px;font-size:17.5px;line-height:24px;color:#6f747a;letter-spacing:0.144px;">Description</span>
<svg class="a" style="left:1611px;top:421.6px;" width="22" height="21.2" viewBox="0 0 22 22"><rect x="1.4" y="3.6" width="18.6" height="16.4" rx="2.4" fill="none" stroke="#6f747a" stroke-width="1.85"/><path d="M1.4 9 H20 M6.4 1.2 V5 M15 1.2 V5" stroke="#6f747a" stroke-width="1.85" stroke-linecap="round"/></svg>
<span class="a t" style="left:1637.76px;top:421.00px;font-size:17.5px;line-height:24px;color:#6f747a;letter-spacing:-0.088px;">Due Date</span>
<svg class="a" style="left:1828.4px;top:421.3px;" width="20" height="20" viewBox="0 0 20 20"><circle cx="10" cy="10" r="8.7" fill="none" stroke="#6f747a" stroke-width="1.9"/><path d="M7 13 L13 7 M8 6.8 H13.2 V12" fill="none" stroke="#6f747a" stroke-width="1.7" stroke-linecap="round" stroke-linejoin="round"/></svg>
<span class="a t" style="left:1856.41px;top:421.00px;font-size:17.5px;line-height:24px;color:#6f747a;letter-spacing:-1.505px;">Task</span>
<span class="a t" style="top:469.00px;font-size:17.5px;line-height:24px;color:#6c7076;left:410px;width:21px;text-align:center;">1</span>
<span class="a t" style="left:454.56px;top:469.00px;font-size:17.5px;line-height:24px;color:#2a2e34;letter-spacing:0.106px;">Mobile-Friendly Design</span>
<span class="a t" style="left:1264.62px;top:469.00px;font-size:17.5px;line-height:24px;color:#2a2e34;">0</span>
<svg class="a" style="left:1462.5px;top:471.5px;" width="16.2" height="16.0" viewBox="0 0 16 16"><path d="M2.6 0.6 H13.4 Q15.4 0.6 15.4 2.6 V8.4 H10.4 Q8.4 8.4 8.4 10.4 V15.4 H2.6 Q0.6 15.4 0.6 13.4 V2.6 Q0.6 0.6 2.6 0.6 Z" fill="#6c717a"/><path d="M10.6 10.6 H15.2 L10.6 15.2 Z" fill="#6c717a"/></svg>
<span class="a t" style="left:1612.73px;top:469.00px;font-size:17.5px;line-height:24px;color:#2a2e34;letter-spacing:-0.496px;">Jun 30, 2023</span>
<div class="a" style="left:1831.3px;top:464.6px;width:100px;height:31.2px;background:#ffffff;border-radius:7px;box-shadow:0 0 0 1px #efeff1;"></div>
<svg class="a" style="left:1840.4px;top:472.9px;" width="14" height="14" viewBox="0 0 14 14"><path d="M11.9 1.5 Q13 0.9 13 2.2 V10.9 Q13 12.4 11.5 12.4 H2.5 Q0.8 12.4 1.7 11 C3.6 7.6 7.4 3.8 11.9 1.5 Z" fill="#303338"/></svg>
<span class="a t" style="left:1864.69px;top:469.00px;font-size:17.5px;line-height:24px;color:#2a2e34;letter-spacing:0.375px;">Imple</span>
<span class="a t" style="top:516.00px;font-size:17.5px;line-height:24px;color:#6c7076;left:410px;width:21px;text-align:center;">2</span>
<span class="a t" style="left:454.39px;top:516.00px;font-size:17.5px;line-height:24px;color:#2a2e34;letter-spacing:-0.186px;">Improved Page Load Times</span>
<span class="a t" style="left:1264.62px;top:516.00px;font-size:17.5px;line-height:24px;color:#2a2e34;">0</span>
<svg class="a" style="left:1462.5px;top:519.6px;" width="16.2" height="16.0" viewBox="0 0 16 16"><path d="M2.6 0.6 H13.4 Q15.4 0.6 15.4 2.6 V8.4 H10.4 Q8.4 8.4 8.4 10.4 V15.4 H2.6 Q0.6 15.4 0.6 13.4 V2.6 Q0.6 0.6 2.6 0.6 Z" fill="#6c717a"/><path d="M10.6 10.6 H15.2 L10.6 15.2 Z" fill="#6c717a"/></svg>
<span class="a t" style="left:1612.73px;top:516.00px;font-size:17.5px;line-height:24px;color:#2a2e34;letter-spacing:-0.465px;">Jul 15, 2023</span>
<div class="a" style="left:1831.3px;top:512.1px;width:100px;height:31.2px;background:#ffffff;border-radius:7px;box-shadow:0 0 0 1px #efeff1;"></div>
<svg class="a" style="left:1840.4px;top:520.4px;" width="14" height="14" viewBox="0 0 14 14"><path d="M11.9 1.5 Q13 0.9 13 2.2 V10.9 Q13 12.4 11.5 12.4 H2.5 Q0.8 12.4 1.7 11 C3.6 7.6 7.4 3.8 11.9 1.5 Z" fill="#303338"/></svg>
<span class="a t" style="left:1865.47px;top:516.00px;font-size:17.5px;line-height:24px;color:#2a2e34;letter-spacing:0.378px;">Optim</span>
<span class="a t" style="top:564.00px;font-size:17.5px;line-height:24px;color:#6c7076;left:410px;width:21px;text-align:center;">3</span>
<span class="a t" style="left:455.17px;top:564.00px;font-size:17.5px;line-height:24px;color:#2a2e34;letter-spacing:-0.137px;">Accessibility Compliance</span>
<span class="a t" style="left:1264.62px;top:564.00px;font-size:17.5px;line-height:24px;color:#2a2e34;">0</span>
<svg class="a" style="left:1462.5px;top:566.5px;" width="16.2" height="16.0" viewBox="0 0 16 16"><path d="M2.6 0.6 H13.4 Q15.4 0.6 15.4 2.6 V8.4 H10.4 Q8.4 8.4 8.4 10.4 V15.4 H2.6 Q0.6 15.4 0.6 13.4 V2.6 Q0.6 0.6 2.6 0.6 Z" fill="#6c717a"/><path d="M10.6 10.6 H15.2 L10.6 15.2 Z" fill="#6c717a"/></svg>
<span class="a t" style="left:1612.97px;top:564.00px;font-size:17.5px;line-height:24px;color:#2a2e34;letter-spacing:-0.274px;">Aug 10, 2023</span>
<div class="a" style="left:1831.3px;top:559.6px;width:100px;height:31.2px;background:#ffffff;border-radius:7px;box-shadow:0 0 0 1px #efeff1;"></div>
<svg class="a" style="left:1840.4px;top:567.9px;" width="14" height="14" viewBox="0 0 14 14"><path d="M11.9 1.5 Q13 0.9 13 2.2 V10.9 Q13 12.4 11.5 12.4 H2.5 Q0.8 12.4 1.7 11 C3.6 7.6 7.4 3.8 11.9 1.5 Z" fill="#303338"/></svg>
<span class="a t" style="left:1866.27px;top:564.00px;font-size:17.5px;line-height:24px;color:#2a2e34;letter-spacing:0.119px;">Audit</span>
<svg class="a" style="left:413px;top:615px;" width="15" height="15" viewBox="0 0 15 15"><path d="M7.5 1.5 V13.5 M1.5 7.5 H13.5" stroke="#4dae50" stroke-width="1.7" stroke-linecap="round"/></svg>
<span class="a t" style="left:452.61px;top:611.00px;font-size:17.5px;line-height:24px;color:#7b838d;letter-spacing:-0.116px;">To add a new row, press Shift+Enter</span>
<div class="a" style="left:1910.6px;top:150.5px;width:9.4px;height:930px;background:linear-gradient(to right,#f2f2f5,#f9f9fb 5px,#fafafc);"></div>
<div class="a" style="left:445px;top:1049.8px;width:1465.6px;height:22px;background:#f1f1f1;"></div>
<div class="a" style="left:466px;top:1051.9px;width:1094px;height:17px;background:#c1c1c1;"></div>
<svg class="a" style="left:451px;top:1054px;" width="9" height="13" viewBox="0 0 9 13"><path d="M7.2 1.5 L1.8 6.5 L7.2 11.5 Z" fill="#a3a3a3"/></svg>
<svg class="a" style="left:1895px;top:1054px;" width="9" height="13" viewBox="0 0 9 13"><path d="M1.5 1.5 L7 6.5 L1.5 11.5 Z" fill="#4a4a4a"/></svg>
<div class="a" style="left:1857.6px;top:1017.8px;width:40px;height:40px;background:#ffffff;border-radius:20px;box-shadow:0 0 4px rgba(0,0,0,.10);"></div>
<span class="a t" style="top:1026.00px;font-size:19px;line-height:26px;color:#3a3e44;left:1857.6px;width:40px;text-align:center;">?</span>
</main>
<svg class="a" style="left:158px;top:536px;" width="24" height="30" viewBox="158 536 24 30"><path d="M166.2 540.4 Q166.2 539.2 167.9 539.2 Q169.6 539.2 169.6 540.4 L169.6 544.7 Q171 544.1 172.6 545 Q174.1 544.9 175.5 545.9 Q177.1 545.9 178.2 547.2 Q178.8 547.9 178.8 549 L178.8 555.5 Q178.8 560 175 562 Q171.5 563.4 168.5 561.6 Q166.4 560 164.5 556.6 L162.3 553.2 Q161.5 552 162.6 551.5 Q163.8 551.2 164.8 552.3 L166.2 553.7 Z" fill="#ffffff" stroke="#111111" stroke-width="1.15" stroke-linejoin="round"/><path d="M169.6 544.7 V549.4 M172.6 545.2 V549.6 M175.5 546.2 V549.8" fill="none" stroke="#111111" stroke-width="1.05" stroke-linecap="round"/></svg>
</div>
</body>
</html>
